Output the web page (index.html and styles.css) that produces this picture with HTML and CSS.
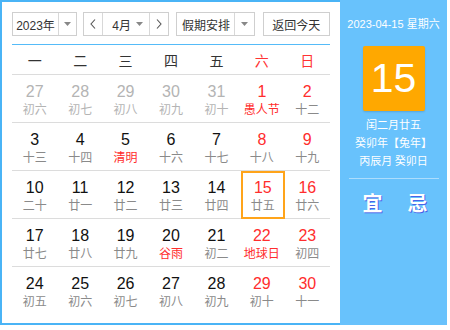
FILE: index.html
```html
<!DOCTYPE html>
<html lang="zh-CN">
<head>
<meta charset="utf-8">
<title>万年历</title>
<link rel="stylesheet" href="styles.css">
</head>
<body>
<div class="cal">
  <div class="main">
    <div class="toolbar">
      <div class="ctl year">
        <span class="val">2023年</span>
        <span class="drop"><svg width="7" height="4" viewBox="0 0 7 4"><path d="M0 0h7L3.5 4z" fill="#888"/></svg></span>
      </div>
      <div class="ctl month">
        <span class="nav"><svg width="6" height="10" viewBox="0 0 6 10"><path d="M5 0.5L1 5l4 4.5" fill="none" stroke="#555" stroke-width="1.1"/></svg></span>
        <span class="mid"><span class="val">4月</span><svg width="7" height="4" viewBox="0 0 7 4"><path d="M0 0h7L3.5 4z" fill="#888"/></svg></span>
        <span class="nav"><svg width="6" height="10" viewBox="0 0 6 10"><path d="M1 0.5L5 5l-4 4.5" fill="none" stroke="#555" stroke-width="1.1"/></svg></span>
      </div>
      <div class="ctl holiday">
        <span class="val">假期安排</span>
        <span class="drop"><svg width="7" height="4" viewBox="0 0 7 4"><path d="M0 0h7L3.5 4z" fill="#888"/></svg></span>
      </div>
      <div class="ctl today">返回今天</div>
    </div>
    <div class="weekdays">
      <span>一</span><span>二</span><span>三</span><span>四</span><span>五</span><span class="red">六</span><span class="red">日</span>
    </div>
    <div class="week">
      <div class="cell other"><b>27</b><i>初六</i></div>
      <div class="cell other"><b>28</b><i>初七</i></div>
      <div class="cell other"><b>29</b><i>初八</i></div>
      <div class="cell other"><b>30</b><i>初九</i></div>
      <div class="cell other"><b>31</b><i>初十</i></div>
      <div class="cell we"><b>1</b><i class="fest">愚人节</i></div>
      <div class="cell we"><b>2</b><i>十二</i></div>
    </div>
    <div class="week">
      <div class="cell"><b>3</b><i>十三</i></div>
      <div class="cell"><b>4</b><i>十四</i></div>
      <div class="cell"><b>5</b><i class="fest">清明</i></div>
      <div class="cell"><b>6</b><i>十六</i></div>
      <div class="cell"><b>7</b><i>十七</i></div>
      <div class="cell we"><b>8</b><i>十八</i></div>
      <div class="cell we"><b>9</b><i>十九</i></div>
    </div>
    <div class="week">
      <div class="cell"><b>10</b><i>二十</i></div>
      <div class="cell"><b>11</b><i>廿一</i></div>
      <div class="cell"><b>12</b><i>廿二</i></div>
      <div class="cell"><b>13</b><i>廿三</i></div>
      <div class="cell"><b>14</b><i>廿四</i></div>
      <div class="cell we sel"><b>15</b><i>廿五</i></div>
      <div class="cell we"><b>16</b><i>廿六</i></div>
    </div>
    <div class="week">
      <div class="cell"><b>17</b><i>廿七</i></div>
      <div class="cell"><b>18</b><i>廿八</i></div>
      <div class="cell"><b>19</b><i>廿九</i></div>
      <div class="cell"><b>20</b><i class="fest">谷雨</i></div>
      <div class="cell"><b>21</b><i>初二</i></div>
      <div class="cell we"><b>22</b><i class="fest">地球日</i></div>
      <div class="cell we"><b>23</b><i>初四</i></div>
    </div>
    <div class="week last">
      <div class="cell"><b>24</b><i>初五</i></div>
      <div class="cell"><b>25</b><i>初六</i></div>
      <div class="cell"><b>26</b><i>初七</i></div>
      <div class="cell"><b>27</b><i>初八</i></div>
      <div class="cell"><b>28</b><i>初九</i></div>
      <div class="cell we"><b>29</b><i>初十</i></div>
      <div class="cell we"><b>30</b><i>十一</i></div>
    </div>
  </div>
  <div class="side">
    <div class="date">2023-04-15 星期六</div>
    <div class="big">15</div>
    <div class="lunar">闰二月廿五</div>
    <div class="lunar">癸卯年【兔年】</div>
    <div class="lunar">丙辰月 癸卯日</div>
    <div class="sep"></div>
    <div class="yiji"><span>宜</span><span>忌</span></div>
  </div>
</div>
</body>
</html>
```
FILE: styles.css
```css
html, body {
  margin: 0;
  padding: 0;
  background: #fff;
}
body {
  font-family: "Liberation Sans", "Noto Sans CJK SC", sans-serif;
  color: #333;
}
.cal {
  display: flex;
  width: 447px;
  height: 325px;
}
.main {
  box-sizing: border-box;
  width: 340px;
  height: 325px;
  border: 2px solid #4ab4f6;
  border-right: none;
  padding: 10px 10px 0 10px;
  background: #fff;
}
.toolbar {
  display: flex;
  height: 24px;
  margin-bottom: 8px;
}
.ctl {
  box-sizing: border-box;
  display: flex;
  height: 24px;
  border: 1px solid #cfcfcf;
  background: #fff;
  font-size: 12px;
  color: #333;
  align-items: stretch;
}
.ctl .val {
  display: flex;
  align-items: center;
  justify-content: center;
}
.ctl .drop {
  display: flex;
  align-items: center;
  justify-content: center;
  border-left: 1px solid #d8d8d8;
}
.year { width: 66px; }
.year .val { width: 45px; }
.year .drop { flex: 1; }
.month { width: 87px; margin-left: 6px; }
.month .nav {
  display: flex;
  align-items: center;
  justify-content: center;
  width: 18px;
}
.month .nav:first-child { border-right: 1px solid #d8d8d8; }
.month .nav:last-child { border-left: 1px solid #d8d8d8; }
.month .mid {
  flex: 1;
  display: flex;
  align-items: center;
  justify-content: space-between;
  padding: 0 6px 0 9px;
}
.holiday { width: 79px; margin-left: 7px; }
.holiday .val { width: 57px; }
.holiday .drop { flex: 1; }
.today {
  width: 68px;
  margin-left: 8px;
  align-items: center;
  justify-content: center;
}
.weekdays {
  display: grid;
  grid-template-columns: repeat(7, 1fr);
  height: 29px;
  border-top: 1px solid #55bbf8;
  border-bottom: 1px solid #dcdcdc;
  font-size: 14px;
  color: #333;
  align-items: center;
  justify-items: center;
  font-family: "Noto Sans CJK SC", sans-serif;
}
.weekdays .red { color: #ff3333; }
.week {
  display: grid;
  grid-template-columns: repeat(7, 1fr);
  height: 47px;
  border-bottom: 1px solid #dcdcdc;
}
.week.last { border-bottom: none; }
.cell {
  display: flex;
  flex-direction: column;
  align-items: center;
  justify-content: center;
  padding-top: 2px;
  box-sizing: border-box;
}
.cell b {
  font-weight: normal;
  font-size: 16px;
  line-height: 18px;
  color: #111;
}
.cell i {
  font-style: normal;
  font-size: 12px;
  line-height: 16px;
  color: #8a8a8a;
  font-family: "Noto Sans CJK SC", sans-serif;
}
.cell.we b { color: #ff2d2d; }
.cell.other b { color: #b4b4b4; }
.cell.other i { color: #b4b4b4; }
.cell i.fest { color: #ff2d2d; }
.cell.sel {
  box-shadow: inset 0 0 0 2px #ffa41a;
  height: 48px;
  margin-left: 2px;
}
.side {
  width: 107px;
  height: 325px;
  background: #68c2fc;
  display: flex;
  flex-direction: column;
  align-items: center;
  color: #fff;
  font-family: "Liberation Sans", "Noto Sans CJK SC", sans-serif;
}
.date {
  margin-top: 16px;
  font-size: 11px;
  line-height: 16px;
}
.big {
  margin-top: 14px;
  width: 62px;
  height: 65px;
  background: #ffa800;
  border-radius: 2px;
  box-shadow: 0 1px 2px rgba(0,0,0,0.15);
  font-size: 41px;
  line-height: 65px;
  text-align: center;
  color: #fff;
}
.lunar {
  font-size: 11px;
  line-height: 18px;
  font-family: "Noto Sans CJK SC", sans-serif;
}
.big + .lunar { margin-top: 4px; }
.sep {
  margin-top: 9px;
  width: 90px;
  height: 1px;
  background: rgba(255,255,255,0.45);
}
.yiji {
  margin-top: 11px;
  display: flex;
  gap: 25px;
  font-size: 20px;
  line-height: 26px;
  font-weight: bold;
  font-family: "Noto Sans CJK SC", sans-serif;
  text-shadow: 1px 1px 0 #4a63e8;
  padding-left: 3px;
}
```
